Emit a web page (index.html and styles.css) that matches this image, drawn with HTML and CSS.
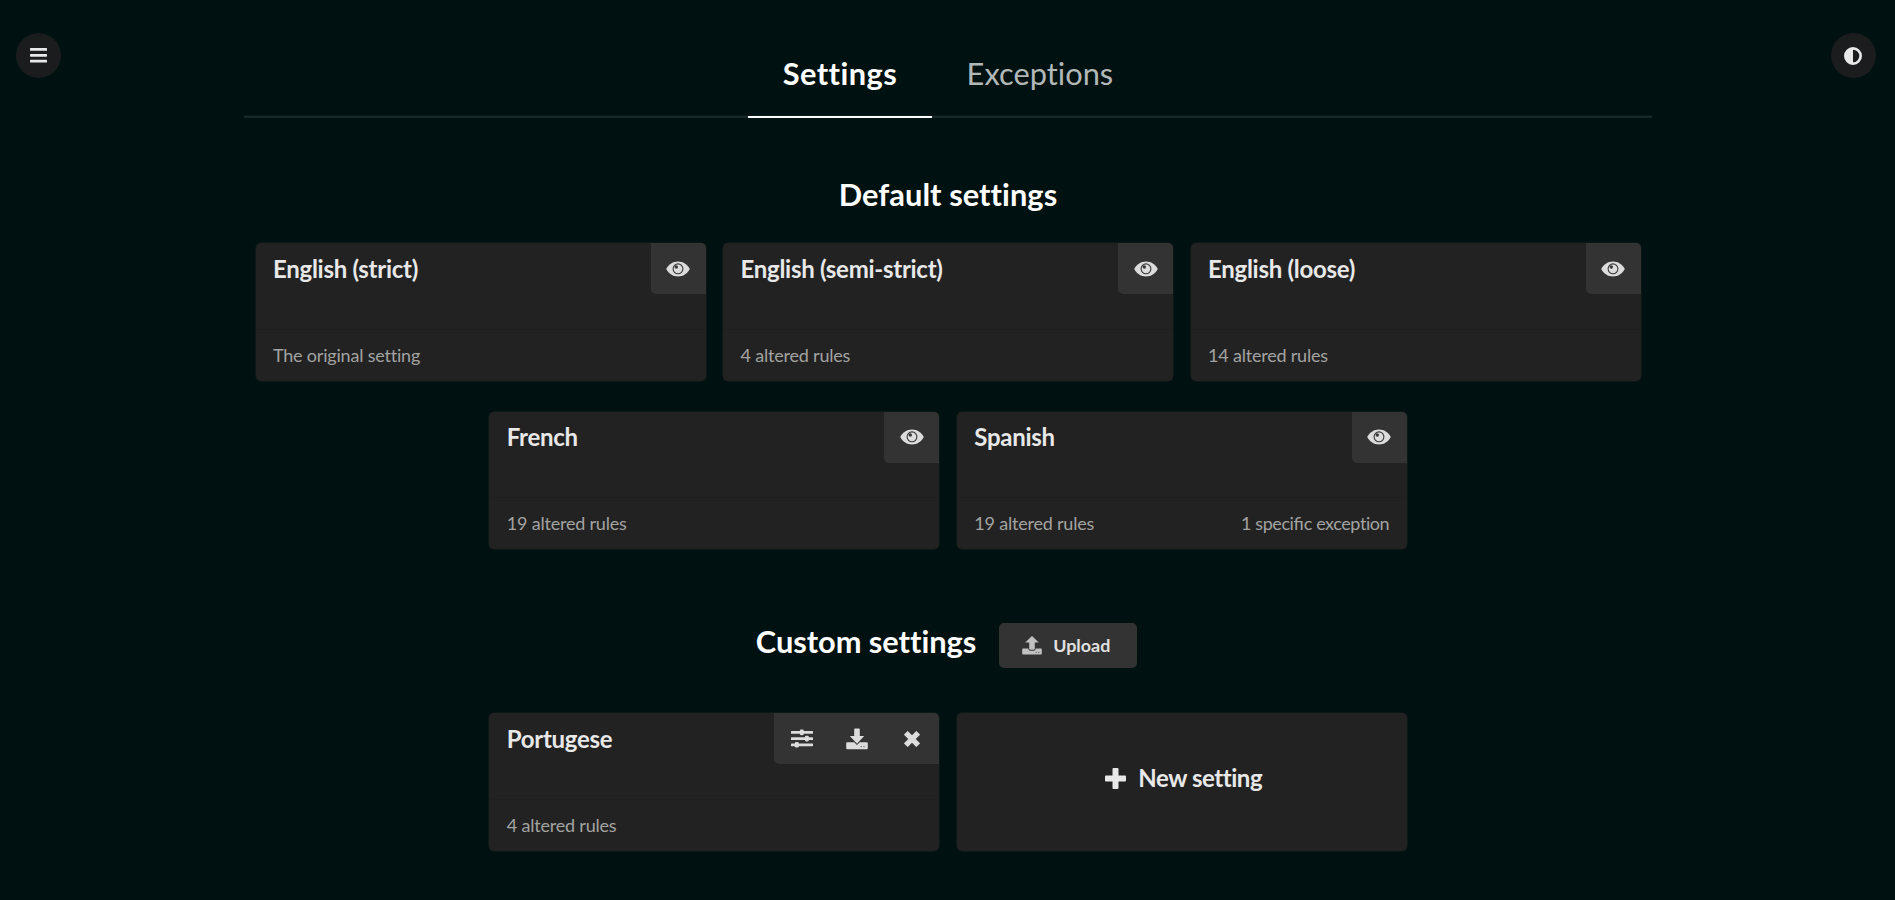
FILE: index.html
```
<!DOCTYPE html>
<html lang="en">
<head>
<meta charset="utf-8">
<title>Settings</title>
<link rel="stylesheet" href="styles.css">
</head>
<body>
<svg class="sprite" aria-hidden="true">
  <symbol id="eye" viewBox="0 0 24 16">
    <path fill="currentColor" d="M.2 8C2.8 3.2 7 .5 12 .5S21.200 3.200 23.800 8C21.200 12.800 17 15.500 12 15.500S2.800 12.800.2 8z"/>
    <circle cx="12" cy="7.800" r="4.900" fill="none" stroke="#383838" stroke-width="1.100"/>
    <circle cx="10.300" cy="6" r="1.700" fill="#383838"/>
  </symbol>
</svg>

<button class="round round-left" aria-label="Menu">
  <svg width="17" height="15" viewBox="0 0 17 15"><path fill="currentColor" d="M.6 0h15.800q.6 0 .6.600v1.600q0 .6-.6.600H.6Q0 2.800 0 2.200V.6Q0 0 .6 0zM.6 5.900h15.800q.6 0 .6.600v1.600q0 .6-.6.600H.6Q0 8.700 0 8.100V6.500q0-.6.6-.6zM.6 11.800h15.800q.6 0 .6.600V14q0 .6-.6.600H.6Q0 14.600 0 14v-1.600q0-.6.6-.6z"/></svg>
</button>
<button class="round round-right" aria-label="Contrast">
  <svg width="18" height="18" viewBox="0 0 18 18"><path fill="currentColor" fill-rule="evenodd" d="M9 0a9 9 0 1 1 0 18A9 9 0 0 1 9 0zm0 2.700v12.600a6.300 6.300 0 0 0 0-12.600z"/></svg>
</button>

<main class="page">
  <nav class="tabs">
    <a class="tab active">Settings</a>
    <a class="tab">Exceptions</a>
  </nav>

  <h2 class="heading">Default settings</h2>
  <section class="cards">
    <article class="card">
      <div class="card-main"><h3>English (strict)</h3><div class="actions"><button aria-label="View"><svg width="24" height="16"><use href="#eye"/></svg></button></div></div>
      <div class="meta"><span>The original setting</span></div>
    </article>
    <article class="card">
      <div class="card-main"><h3>English (semi-strict)</h3><div class="actions"><button aria-label="View"><svg width="24" height="16"><use href="#eye"/></svg></button></div></div>
      <div class="meta"><span>4 altered rules</span></div>
    </article>
    <article class="card">
      <div class="card-main"><h3>English (loose)</h3><div class="actions"><button aria-label="View"><svg width="24" height="16"><use href="#eye"/></svg></button></div></div>
      <div class="meta"><span>14 altered rules</span></div>
    </article>
    <article class="card">
      <div class="card-main"><h3>French</h3><div class="actions"><button aria-label="View"><svg width="24" height="16"><use href="#eye"/></svg></button></div></div>
      <div class="meta"><span>19 altered rules</span></div>
    </article>
    <article class="card">
      <div class="card-main"><h3>Spanish</h3><div class="actions"><button aria-label="View"><svg width="24" height="16"><use href="#eye"/></svg></button></div></div>
      <div class="meta"><span>19 altered rules</span><span class="exceptions">1 speci<span class="lig">fi</span>c exception</span></div>
    </article>
  </section>

  <div class="custom-head">
    <h2>Custom settings</h2>
    <button class="upload">
      <svg width="20" height="19" viewBox="0 0 20 19"><path fill="currentColor" fill-rule="evenodd" d="M10 0l6.800 6.600h-4v5.900q0 1.300-1.300 1.300H8.500q-1.300 0-1.300-1.300V6.600H3.200zM1 12.500h5.300q.2 2.200 2.200 2.200h3q2 0 2.200-2.200H19q.8 0 .8.800v4.400q0 .8-.8.800H1q-.8 0-.8-.8v-4.400q0-.8.8-.8z"/><path stroke="#555" stroke-width=".9" d="M13.600 16.400h1.100M16.200 16.400h1.100"/></svg>
      <span>Upload</span>
    </button>
  </div>

  <section class="cards">
    <article class="card">
      <div class="card-main"><h3>Portugese</h3><div class="actions">
        <button aria-label="Edit"><svg width="22" height="19" viewBox="0 0 22 19"><g fill="currentColor"><rect y="2" width="22" height="2.800" rx=".6"/><rect y="8.200" width="22" height="2.800" rx=".6"/><rect y="14.400" width="22" height="2.800" rx=".6"/><rect x="8.800" y=".6" width="4" height="5.600" rx="1.400"/><rect x="13.900" y="6.800" width="4" height="5.600" rx="1.400"/><rect x="3.800" y="13" width="4" height="5.600" rx="1.400"/></g></svg></button>
        <button aria-label="Download"><svg width="22" height="22" viewBox="0 0 22 22"><path fill="currentColor" d="M9 .4h4q.8 0 .8.800v6.900h4.400L11 15.700 3.800 8.100h4.400V1.200q0-.8.800-.8z"/><path fill="currentColor" d="M1.200 14.200h7L11 17l2.800-2.800h7q1 0 1 1v5q0 1-1 1H1.200q-1 0-1-1v-5q0-1 1-1z"/><path stroke="#555" stroke-width=".9" d="M14.600 18.600h1.200M17.400 18.600h1.200"/></svg></button>
        <button aria-label="Delete"><svg width="16" height="16" viewBox="0 0 16 16"><path fill="none" stroke="currentColor" stroke-width="5.300" d="M1.800 1.800l12.400 12.400M14.200 1.800L1.800 14.200"/></svg></button>
      </div></div>
      <div class="meta"><span>4 altered rules</span></div>
    </article>
    <article class="card new">
      <svg width="21" height="21" viewBox="0 0 21 21"><path fill="currentColor" d="M8.500 0h4q1 0 1 1v6.500H20q1 0 1 1v4q0 1-1 1h-6.500V20q0 1-1 1h-4q-1 0-1-1v-6.500H1q-1 0-1-1v-4q0-1 1-1h6.500V1q0-1 1-1z"/></svg>
      <h3>New setting</h3>
    </article>
  </section>
</main>
</body>
</html>
```
FILE: styles.css
```
* { box-sizing: border-box; }
html, body { height: 100%; overflow: hidden; }
body {
  margin: 0;
  background: #001111;
  color: #fff;
  font-family: Lato, "Open Sans", sans-serif;
  font-size: 17.6px;
  font-variant-ligatures: none;
}
h2, h3 { margin: 0; font-weight: 700; }
button { border: 0; padding: 0; font: inherit; color: inherit; background: none; }
svg { display: block; flex: none; }
.sprite { position: absolute; width: 0; height: 0; }

/* Floating corner buttons */
.round {
  position: fixed;
  top: 33px;
  width: 45px;
  height: 45px;
  border-radius: 50%;
  background: #1b1c1d;
  color: #e8e8e8;
  display: flex;
  align-items: center;
  justify-content: center;
}
.round-left { left: 16px; }
.round-right { right: 19px; padding-right: 1px; }

.page { width: 1408px; margin: 0 auto; }

.tabs {
  display: flex;
  justify-content: center;
  height: 118px;
  padding-top: 57px;
  border-bottom: 2px solid #1a2928;
  box-shadow: inset 0 -1px #081a19;
}
.tab {
  height: 61px;
  width: 215px;
  padding-left: 34.6px;
  font-size: 30.8px;
  line-height: 34px;
  color: #b2b8b8;
}
.tab.active {
  width: 184px;
  padding: 0;
  text-align: center;
  font-weight: 700;
  letter-spacing: .45px;
  color: #fff;
  border-bottom: 2px solid #fff;
}

.heading {
  margin-top: 60px;
  padding-left: 1px;
  font-size: 30.8px;
  line-height: 34px;
  letter-spacing: .05px;
  text-align: center;
}

.cards {
  display: flex;
  flex-wrap: wrap;
  justify-content: center;
  gap: 31px 17.5px;
  margin-top: 31px;
  padding-left: 1px;
}
.card {
  display: flex;
  flex-direction: column;
  width: 450px;
  height: 137.6px;
  border-radius: 5px;
  background: #222;
  box-shadow: 0 0 0 1px rgba(34, 34, 34, .35);
  overflow: hidden;
}
.card-main { display: flex; flex: 1; justify-content: space-between; padding-left: 17.5px; }
.card h3 {
  font-size: 24px;
  line-height: 28px;
  letter-spacing: -.28px;
  color: #e8e8e8;
}
.card-main h3 { padding-top: 11.8px; }
.actions { display: flex; height: 51px; background: #333; border-bottom-left-radius: 5px; }
.actions button {
  display: flex;
  align-items: center;
  justify-content: center;
  width: 55px;
  color: #dcdcdc;
}
.meta {
  display: flex;
  justify-content: space-between;
  height: 52px;
  padding: 7px 17.5px 0;
  border-top: 1px solid #1f1f1f;
  font-size: 18px;
  letter-spacing: -.2px;
  line-height: 36px;
  color: #a3a3a1;
}
.exceptions { letter-spacing: -.42px; }
.lig { letter-spacing: 0; font-variant-ligatures: normal; }

.custom-head {
  display: flex;
  justify-content: center;
  height: 45px;
  margin-top: 73.8px;
  padding-right: 2px;
  gap: 23px;
}
.custom-head h2 { padding-top: 2px; font-size: 30.8px; line-height: 34px; letter-spacing: -.05px; }
.upload {
  display: flex;
  align-items: center;
  gap: 11px;
  width: 138px;
  padding-left: 23px;
  border-radius: 5px;
  background: #333;
  color: #c0c0c0;
  font-weight: 700;
  font-size: 17.9px;
}
.upload span { color: #e0e0e0; }
.custom-head + .cards { margin-top: 45.2px; }

.card.new { flex-direction: row; align-items: center; justify-content: center; gap: 12px; padding: 0 0 7px 4px; color: #e8e8e8; }
.card.new h3 { letter-spacing: -.45px; }
```
